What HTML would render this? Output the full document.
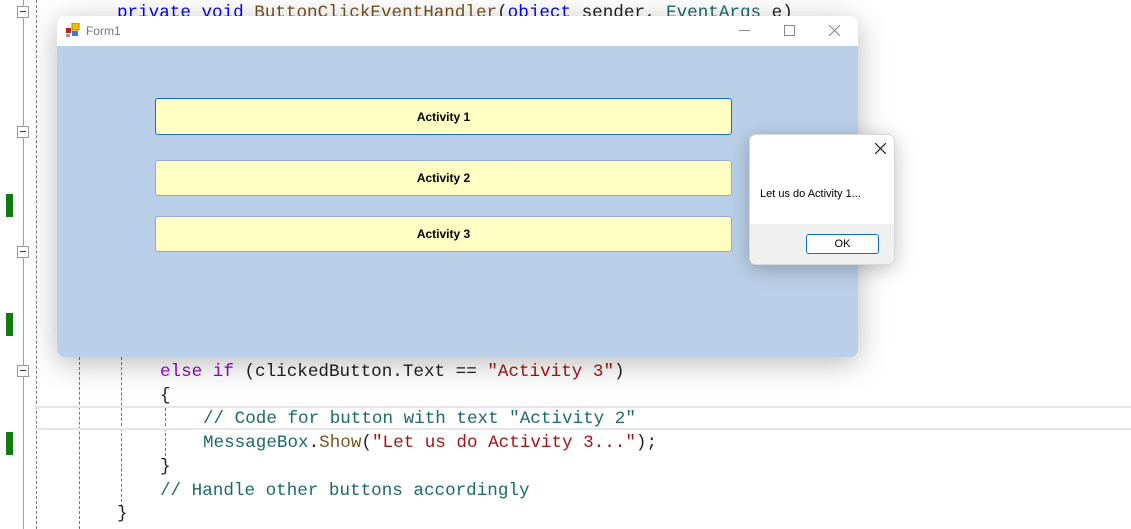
<!DOCTYPE html>
<html><head><meta charset="utf-8"><style>
html,body{margin:0;padding:0;width:1131px;height:529px;overflow:hidden;background:#fff;position:relative;font-family:"Liberation Sans",sans-serif}
.abs{position:absolute}
.code{position:absolute;font-family:"Liberation Mono","DejaVu Sans Mono",monospace;font-size:17.6px;white-space:pre;line-height:24px;height:24px}
.kw{color:#0000ff}.kw2{color:#8f08c4}.str{color:#a31515}.cm{color:#1b6a6a}.ty{color:#1b6a6a}.tx{color:#1f1f1f}.mt{color:#74531f}
.dash{position:absolute;width:0;border-left:1px dashed #777}
.fold{position:absolute;left:17px;width:10px;height:10px;border:1px solid #999;background:#fff}
.fold:after{content:"";position:absolute;left:2px;top:4px;width:6px;height:1px;background:#333}
.green{position:absolute;left:6px;width:7px;background:#107c10}
.btn{position:absolute;left:155px;width:575px;background:#ffffc4;border:1px solid #97a9c4;border-radius:3px;font-size:12px;font-weight:bold;text-align:center;color:#000}
</style></head><body>
<div class="abs" style="left:23px;top:0;width:1px;height:529px;background:#a0a0a0"></div>
<div class="dash" style="left:36px;top:0;height:529px"></div>
<div class="dash" style="left:79px;top:357px;height:172px"></div>
<div class="dash" style="left:121px;top:357px;height:150px"></div>
<div class="dash" style="left:165px;top:408px;height:48px"></div>
<div class="fold" style="top:6px"></div>
<div class="fold" style="top:126px"></div>
<div class="fold" style="top:246px"></div>
<div class="fold" style="top:365px"></div>
<div class="green" style="top:194px;height:23px"></div>
<div class="green" style="top:313px;height:23px"></div>
<div class="green" style="top:432px;height:23px"></div>
<div class="abs" style="left:35px;top:406px;width:1096px;height:20px;border-top:2px solid #e4e4ec;border-bottom:2px solid #e4e4ec"></div>
<div class="code" style="left:117px;top:1px"><span class="kw">private</span> <span class="kw">void</span> <span class="mt">ButtonClickEventHandler</span><span class="tx">(</span><span class="kw">object</span> <span class="tx">sender,</span> <span class="ty">EventArgs</span> <span class="tx">e)</span></div>
<div class="code" style="left:160px;top:360px"><span class="kw2">else</span> <span class="kw2">if</span> <span class="tx">(clickedButton.Text == </span><span class="str">"Activity 3"</span><span class="tx">)</span></div>
<div class="code tx" style="left:160px;top:384px">{</div>
<div class="code cm" style="left:203px;top:407px">// Code for button with text "Activity 2"</div>
<div class="code" style="left:203px;top:431px"><span class="ty">MessageBox</span><span class="tx">.</span><span class="mt">Show</span><span class="tx">(</span><span class="str">"Let us do Activity 3..."</span><span class="tx">);</span></div>
<div class="code tx" style="left:160px;top:455px">}</div>
<div class="code cm" style="left:160px;top:479px">// Handle other buttons accordingly</div>
<div class="code tx" style="left:117px;top:502px">}</div>
<div class="abs" style="left:57px;top:16px;width:801px;height:341px;border-radius:8px;overflow:hidden;box-shadow:0 6px 30px rgba(0,0,0,.28);background:#bad0e8">
  <div class="abs" style="left:0;top:0;width:801px;height:30px;background:#fff"></div>
  <svg class="abs" style="left:9px;top:7px" width="14" height="14" viewBox="0 0 14 14">
    <rect x="6" y="0" width="7" height="7" fill="#f2c200" stroke="#b08000"/>
    <rect x="0" y="5" width="5" height="5" fill="#c0201a"/>
    <rect x="6" y="8" width="6" height="5" fill="#3a7ad8"/>
    <rect x="0" y="11" width="4" height="3" fill="#999"/>
  </svg>
  <div class="abs" style="left:29px;top:8px;font-size:12px;color:#777">Form1</div>
  <div class="abs" style="left:682px;top:14px;width:11px;height:1px;background:#888"></div>
  <div class="abs" style="left:727px;top:9px;width:9px;height:9px;border:1px solid #888"></div>
  <svg class="abs" style="left:772px;top:9px" width="11" height="11"><path d="M0 0L11 11M11 0L0 11" stroke="#888" stroke-width="1.1"/></svg>
</div>
<div class="btn" style="top:98px;height:35px;line-height:36px;border-color:#0f6fd0">Activity 1</div>
<div class="btn" style="top:160px;height:34px;line-height:35px">Activity 2</div>
<div class="btn" style="top:216px;height:34px;line-height:35px">Activity 3</div>
<div class="abs" style="left:749px;top:134px;width:146px;height:131px;border-radius:7px;overflow:hidden;background:#fff;box-shadow:0 4px 20px rgba(0,0,0,.25);border:1px solid #d8d8d8;box-sizing:border-box">
  <svg class="abs" style="left:125px;top:8px" width="11" height="11"><path d="M0 0L11 11M11 0L0 11" stroke="#222" stroke-width="1.2"/></svg>
  <div class="abs" style="left:10px;top:53px;font-size:11px;color:#000">Let us do Activity 1...</div>
  <div class="abs" style="left:0;top:89px;width:146px;height:42px;background:#f0f0f0"></div>
  <div class="abs" style="left:56px;top:99px;width:71px;height:18px;border:1px solid #0f6fd0;border-radius:3px;background:#fdfdfd;font-size:11px;line-height:18px;text-align:center;color:#000">OK</div>
</div>
</body></html>
